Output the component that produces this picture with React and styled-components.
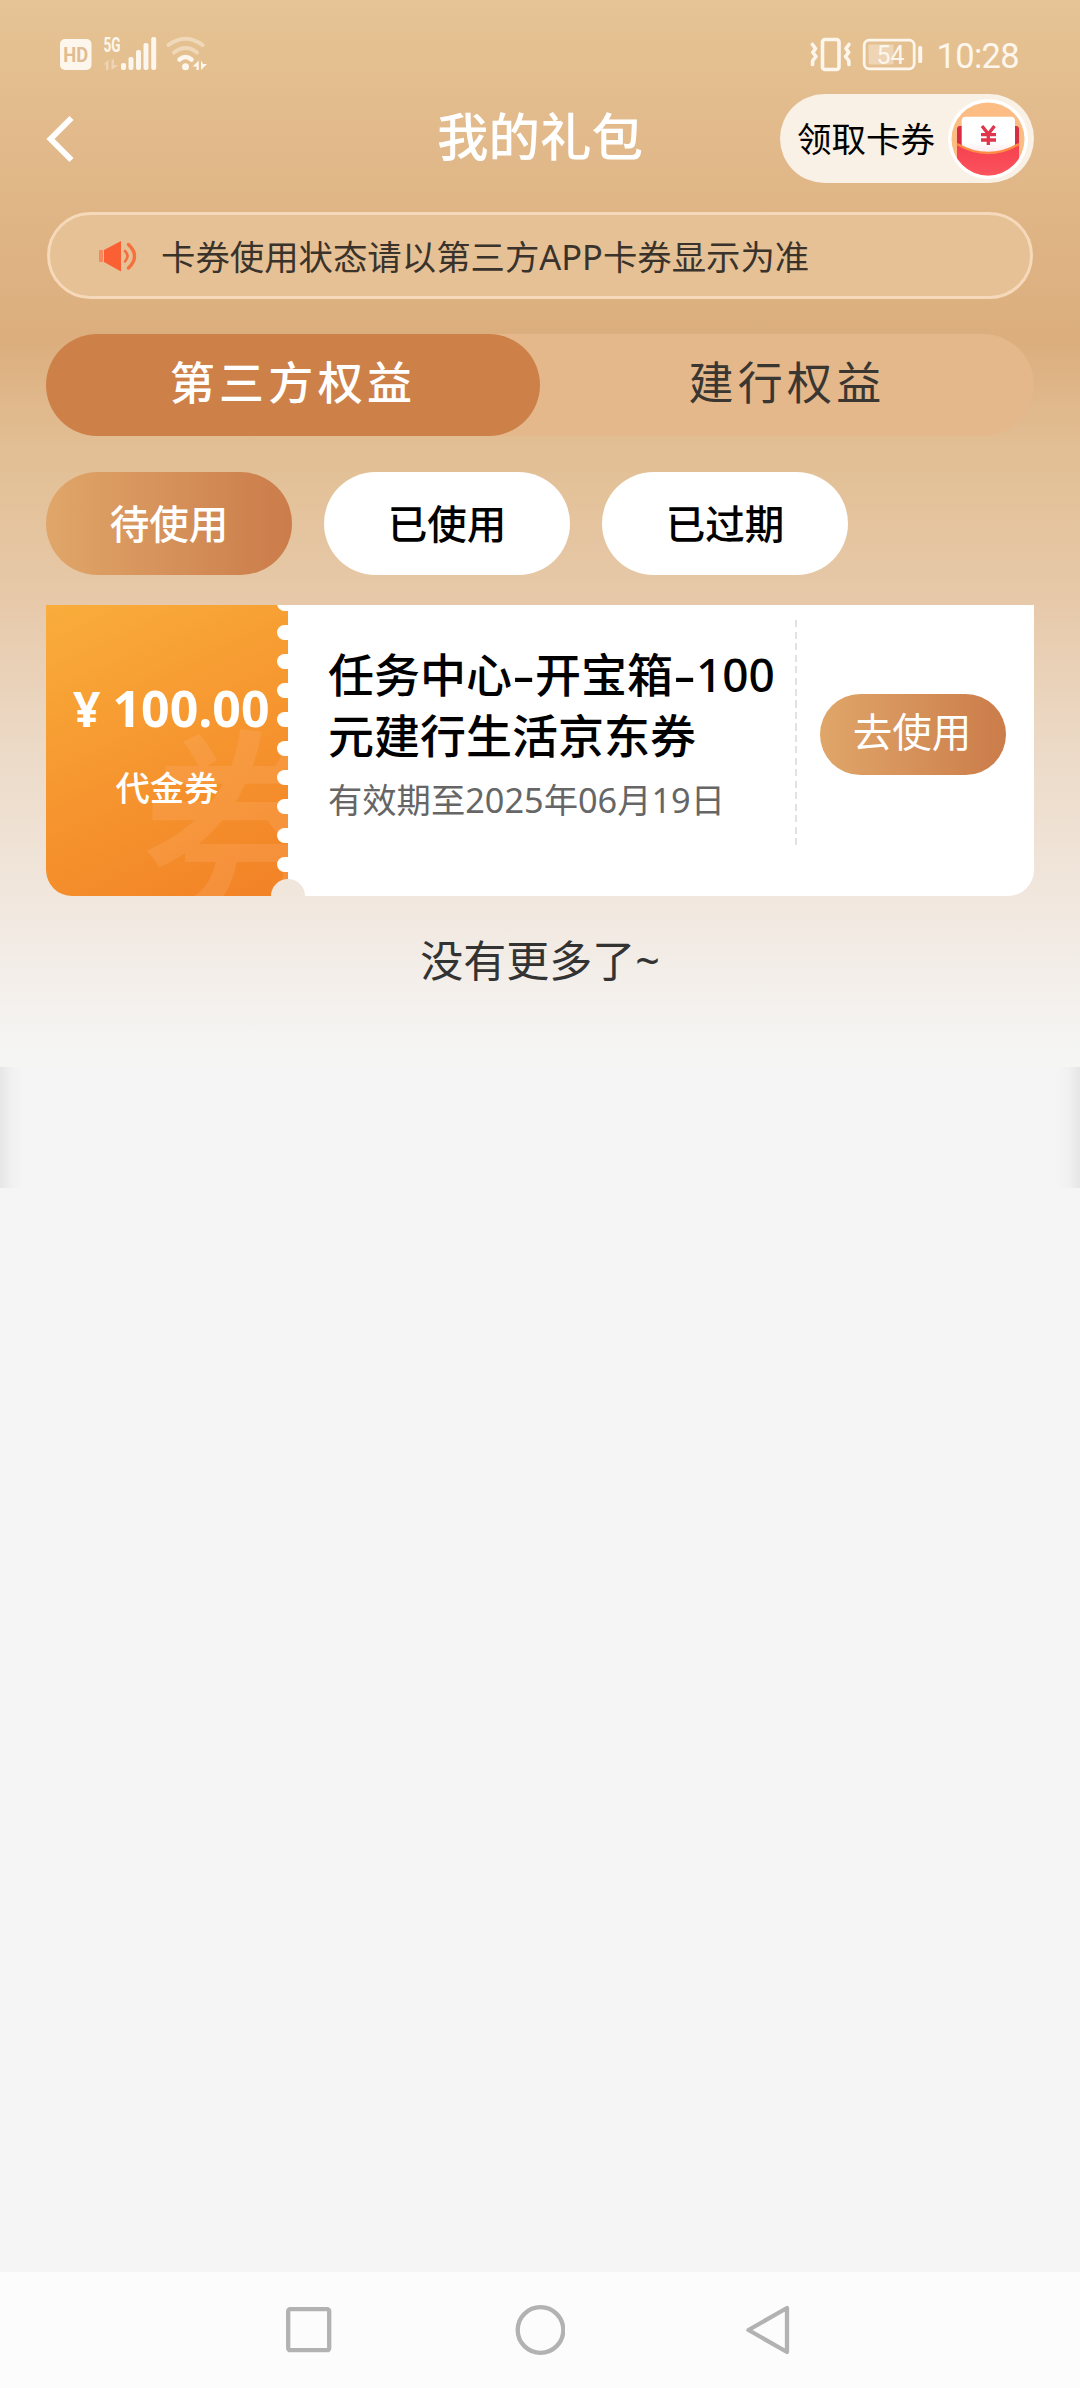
import React from "react";
import styled, { createGlobalStyle } from "styled-components";

const GlobalStyle = createGlobalStyle`
  * {
    box-sizing: border-box;
  }
  body {
    margin: 0;
    background-color: #f5f5f5;
    font-family: "Noto Sans", "Noto Sans CJK SC", sans-serif;
  }
  button {
    font-family: inherit;
    border: none;
    padding: 0;
    cursor: pointer;
  }
`;

const Page = styled.div`
  width: 1080px;
  height: 2388px;
  display: flex;
  flex-direction: column;
  background-color: #f5f5f5;
`;

const Hero = styled.div`
  height: 1067px;
  padding: 0 46px;
  display: flex;
  flex-direction: column;
  background: linear-gradient(
    180deg,
    #e6c495 0px,
    #e2ba8b 130px,
    #dcae7e 340px,
    #e2bf94 450px,
    #e7c9a9 600px,
    #ecdac7 750px,
    #f1e7de 900px,
    #f5f5f4 1050px
  );
`;

const StatusBar = styled.div`
  height: 94px;
  padding: 36px 0 0 12px;
  display: flex;
  align-items: flex-start;
  justify-content: space-between;
`;

const StatusRight = styled.div`
  display: flex;
  align-items: flex-start;
  gap: 10px;
  padding-right: 15px;
`;

const Clock = styled.span`
  font-family: Roboto, sans-serif;
  font-size: 34.5px;
  line-height: 40px;
  letter-spacing: -0.7px;
  margin-left: 3px;
  color: #fdf6ec;
`;

const Header = styled.header`
  height: 89px;
  display: grid;
  grid-template-columns: 1fr auto 1fr;
  align-items: center;
`;

const Title = styled.h1`
  margin: 0 0 6px;
  font-size: 51.5px;
  line-height: 76px;
  font-weight: 500;
  color: #ffffff;
`;

const ClaimButton = styled.button`
  justify-self: end;
  width: 254px;
  height: 89px;
  padding: 0 6px 0 17px;
  display: flex;
  align-items: center;
  justify-content: space-between;
  border-radius: 45px;
  background-color: #f9f0e6;
  color: #000000;
  font-size: 34.5px;
`;

const ClaimText = styled.span`
  padding-bottom: 3px;
`;

const Notice = styled.div`
  height: 87px;
  margin: 29px 1px 0;
  padding: 0 0 2px 48px;
  display: flex;
  align-items: center;
  gap: 23px;
  border: 3px solid #f5d9ba;
  border-radius: 44px;
  background-color: #e6c195;
  color: #3a332c;
  font-size: 34.4px;
`;

const Tabs = styled.div`
  height: 102px;
  margin-top: 35px;
  display: flex;
  border-radius: 51px;
  background-color: #e4b88b;
`;

const Tab = styled.button`
  flex: 1;
  padding-bottom: 9px;
  border-radius: 51px;
  background-color: ${(props) => (props.$active ? "#cd8149" : "transparent")};
  color: ${(props) => (props.$active ? "#ffffff" : "#3a3632")};
  font-size: 45px;
  font-weight: ${(props) => (props.$active ? 500 : 400)};
  letter-spacing: 4.3px;
`;

const Filters = styled.div`
  display: flex;
  gap: 32px;
  margin-top: 36px;
`;

const Filter = styled.button`
  width: 246px;
  height: 103px;
  padding-bottom: 4px;
  border-radius: 52px;
  background: ${(props) =>
    props.$active ? "linear-gradient(90deg, #e0a669, #cb7c4a)" : "#ffffff"};
  color: ${(props) => (props.$active ? "#ffffff" : "#000000")};
  font-size: 39.5px;
  font-weight: 500;
`;

const Coupon = styled.div`
  position: relative;
  height: 291px;
  margin-top: 30px;
  display: flex;
  border-radius: 0 0 26px 26px;
  overflow: hidden;
  background-color: #ffffff;
`;

const Amount = styled.div`
  position: relative;
  width: 242px;
  padding-top: 69px;
  overflow: hidden;
  background: linear-gradient(155deg, #f9ad3b 0%, #f6962f 50%, #f28226 100%);
  color: #ffffff;
`;

const Watermark = styled.span`
  position: absolute;
  left: 94px;
  top: 107px;
  font-family: "Noto Sans CJK SC", sans-serif;
  font-size: 212px;
  line-height: 212px;
  font-weight: 500;
  color: rgba(255, 180, 120, 0.24);
`;

const Price = styled.div`
  position: relative;
  display: flex;
  align-items: baseline;
  gap: 12px;
  padding-left: 27px;
  line-height: 68px;
  font-size: 50px;
  font-weight: 700;
  white-space: nowrap;
`;

const Yen = styled.span`
  font-size: 48px;
`;

const Kind = styled.div`
  position: relative;
  margin-top: 21px;
  text-align: center;
  font-size: 34.3px;
  line-height: 48px;
  font-weight: 500;
`;

/* perforated edge of the ticket */
const Perforation = styled.div`
  position: absolute;
  right: -3px;
  top: -9px;
  width: 14px;
  height: 291px;
  display: flex;
  flex-direction: column;
  gap: 14px;
`;

const Hole = styled.span`
  flex: none;
  width: 20px;
  height: 15px;
  border-radius: 8px;
  background-color: #ffffff;
`;

const Notch = styled.span`
  position: absolute;
  left: 225px;
  bottom: -17px;
  width: 34px;
  height: 34px;
  border-radius: 50%;
  background-color: #f1e6dc;
`;

const Detail = styled.div`
  flex: 1;
  padding: 39px 0 0 40px;
`;

const CouponName = styled.div`
  font-size: 46px;
  line-height: 61px;
  font-weight: 500;
  color: #000000;
  white-space: nowrap;
`;

const Dash = styled.span`
  display: inline-block;
  width: 0.5em;
  text-align: center;
  transform: scaleX(1.5);
`;

const Expiry = styled.div`
  margin-top: 9px;
  font-size: 34.3px;
  line-height: 50px;
  color: #666666;
`;

const Divider = styled.div`
  width: 2px;
  height: 227px;
  margin-top: 15px;
  background: repeating-linear-gradient(
    180deg,
    #e2e2e2 0 7px,
    transparent 7px 11.5px
  );
`;

const Action = styled.div`
  width: 237px;
  padding: 89px 0 0 23px;
`;

const UseButton = styled.button`
  width: 186px;
  height: 81px;
  padding: 0 2px 9px 0;
  border-radius: 41px;
  background: linear-gradient(90deg, #e0a669, #cb7c4a);
  color: #ffffff;
  font-size: 39.5px;
`;

const NoMore = styled.p`
  margin: 35px 0 0;
  text-align: center;
  font-size: 43px;
  line-height: 60px;
  color: #333333;
`;

const EdgeShade = styled.div`
  height: 121px;
  background: linear-gradient(
    90deg,
    #e6e6e6 0,
    #f1f1f1 12px,
    #f5f5f5 24px,
    #f5f5f5 1056px,
    #f1f1f1 1068px,
    #e6e6e6 1080px
  );
`;

const NavBar = styled.nav`
  height: 116px;
  margin-top: auto;
  padding: 32px 285px 0 284px;
  display: flex;
  justify-content: space-between;
  align-items: flex-start;
  background-color: #fcfcfc;
`;

const SignalIcons = () => (
  <svg width="152" height="36" viewBox="58 36 152 36" fill="#fdf6ec">
    <rect x="60" y="39" width="31.5" height="31" rx="5" />
    <text
      x="75.7"
      y="61.7"
      textAnchor="middle"
      fontFamily="Roboto"
      fontSize="20.5"
      fontWeight="700"
      textLength="25"
      lengthAdjust="spacingAndGlyphs"
      fill="#e0bc90"
    >
      HD
    </text>
    <text
      x="103.5"
      y="51.7"
      fontFamily="Roboto"
      fontSize="20"
      fontWeight="700"
      textLength="17"
      lengthAdjust="spacingAndGlyphs"
    >
      5G
    </text>
    <path
      d="M103.5 64.5L108.5 59.5V70H106V64.5ZM111.5 59.5H114V65H118.5L111.5 70Z"
      opacity="0.4"
    />
    <rect x="121" y="63" width="5" height="7" rx="2" />
    <rect x="128.5" y="57" width="5" height="13" rx="2" />
    <rect x="136" y="50" width="5" height="20" rx="2" />
    <rect x="143.5" y="43" width="5" height="27" rx="2" />
    <rect x="151.2" y="37" width="5" height="33" rx="2" />
    <g fill="none" stroke="#fdf6ec" strokeLinecap="round" strokeWidth="4">
      <path d="M168.5 45Q185.5 32.5 202.5 45" opacity="0.45" />
      <path d="M174 52.5Q185.5 43.5 197 52.5" opacity="0.45" />
      <path d="M179.5 59.5Q185.5 54.5 191.5 59.5" strokeWidth="4.5" />
    </g>
    <circle cx="185.5" cy="66.7" r="3.5" />
    <path d="M192.5 66.5L198.8 60.5V70H196.5V66.5ZM201 60.5L203.2 64H207L201 70Z" />
  </svg>
);

const VibrateIcon = () => (
  <svg
    width="42"
    height="36"
    viewBox="810 36 42 36"
    fill="none"
    stroke="#fdf6ec"
    strokeWidth="3.6"
    strokeLinejoin="round"
    strokeLinecap="round"
  >
    <rect x="822.5" y="39.5" width="16.5" height="30" rx="2.5" />
    <path d="M812.5 44.5L815.5 48.5L812.8 52.5L816 56.5L812.8 60.5L812.5 64.5" />
    <path d="M849 44.5L846 48.5L848.7 52.5L845.5 56.5L848.7 60.5L849 64.5" />
  </svg>
);

const BatteryIcon = () => (
  <svg width="62" height="36" viewBox="862 36 62 36">
    <rect
      x="864.2"
      y="40.2"
      width="50"
      height="28.6"
      rx="5"
      fill="none"
      stroke="#fdf6ec"
      strokeWidth="2.8"
    />
    <rect x="868.5" y="44.5" width="25" height="20" rx="1" fill="#fdf6ec" opacity="0.4" />
    <text
      x="890.5"
      y="64"
      textAnchor="middle"
      fontFamily="Roboto"
      fontSize="25.5"
      textLength="28"
      lengthAdjust="spacingAndGlyphs"
      fill="#fdf6ec"
    >
      54
    </text>
    <rect x="918.2" y="46" width="4" height="17" rx="1.5" fill="#fdf6ec" />
  </svg>
);

const BackIcon = () => (
  <svg width="30" height="50" viewBox="0 0 30 50">
    <path d="M25.5 4L4.5 25L25.5 46" fill="none" stroke="#fff" strokeWidth="5.8" />
  </svg>
);

const EnvelopeIcon = () => (
  <svg width="80" height="80" viewBox="0 0 80 80">
    <defs>
      <clipPath id="disc">
        <circle cx="40" cy="40" r="36.5" />
      </clipPath>
      <linearGradient id="pocket" x1="0" y1="0" x2="0" y2="1">
        <stop offset="0" stopColor="#f5404f" />
        <stop offset="1" stopColor="#fd5560" />
      </linearGradient>
      <linearGradient id="paper" x1="0" y1="0" x2="0" y2="1">
        <stop offset="0.6" stopColor="#ffffff" />
        <stop offset="1" stopColor="#fbdde3" />
      </linearGradient>
    </defs>
    <circle cx="40" cy="40" r="40" fill="#fff" />
    <circle cx="40" cy="40" r="36.5" fill="#fcbd85" />
    <g clipPath="url(#disc)">
      <rect x="9" y="27" width="62" height="30" rx="3" fill="#d92b42" />
      <rect x="13.7" y="17.7" width="53.3" height="42" rx="4" fill="url(#paper)" />
      <path d="M9 45Q40 63 71 45V80H9Z" fill="url(#pocket)" />
      <path d="M9 45Q40 63 71 45" fill="none" stroke="#ff8a45" strokeWidth="2.4" />
    </g>
    <path
      d="M34 27L40.3 35L46.5 27M40.3 34.5V46M33 35.7H48M33 41H48"
      fill="none"
      stroke="#e0354c"
      strokeWidth="3.3"
    />
  </svg>
);

const SpeakerIcon = () => (
  <svg width="40" height="34" viewBox="98 238 40 34">
    <rect x="99" y="250" width="4" height="12" fill="#f68a5e" />
    <path d="M104 250L121 241V271.5L104 262Z" fill="#fb6034" />
    <g fill="none" stroke="#f4703f" strokeLinecap="round" strokeWidth="2.6">
      <path d="M125 251Q130 256 125 261.5" />
      <path d="M128.5 244.5Q140.5 256 128.5 268" strokeWidth="3.4" />
    </g>
  </svg>
);

const NavIcon = ({ children }) => (
  <svg
    width="50"
    height="52"
    viewBox="0 0 50 52"
    fill="none"
    stroke="#b2b2b2"
    strokeWidth="4.3"
    strokeLinejoin="round"
  >
    {children}
  </svg>
);

const HOLES = Array.from({ length: 10 }, (_, i) => i);

export default function App() {
  return (
    <Page>
      <GlobalStyle />
      <Hero>
        <StatusBar>
          <SignalIcons />
          <StatusRight>
            <VibrateIcon />
            <BatteryIcon />
            <Clock>10:28</Clock>
          </StatusRight>
        </StatusBar>
        <Header>
          <BackIcon />
          <Title>我的礼包</Title>
          <ClaimButton>
            <ClaimText>领取卡券</ClaimText>
            <EnvelopeIcon />
          </ClaimButton>
        </Header>
        <Notice>
          <SpeakerIcon />
          卡券使用状态请以第三方APP卡券显示为准
        </Notice>
        <Tabs>
          <Tab $active>第三方权益</Tab>
          <Tab>建行权益</Tab>
        </Tabs>
        <Filters>
          <Filter $active>待使用</Filter>
          <Filter>已使用</Filter>
          <Filter>已过期</Filter>
        </Filters>
        <Coupon>
          <Amount>
            <Watermark>券</Watermark>
            <Price>
              <Yen>¥</Yen>100.00
            </Price>
            <Kind>代金券</Kind>
            <Perforation>
              {HOLES.map((i) => (
                <Hole key={i} />
              ))}
            </Perforation>
          </Amount>
          <Detail>
            <CouponName>
              任务中心<Dash>-</Dash>开宝箱<Dash>-</Dash>100
              <br />
              元建行生活京东券
            </CouponName>
            <Expiry>有效期至2025年06月19日</Expiry>
          </Detail>
          <Divider />
          <Action>
            <UseButton>去使用</UseButton>
          </Action>
          <Notch />
        </Coupon>
        <NoMore>没有更多了~</NoMore>
      </Hero>
      <EdgeShade />
      <NavBar>
        <NavIcon>
          <rect x="4.2" y="5.2" width="41" height="41" rx="2" />
        </NavIcon>
        <NavIcon>
          <circle cx="25.5" cy="26" r="22.8" />
        </NavIcon>
        <NavIcon>
          <path d="M42 4V48L3.5 26Z" />
        </NavIcon>
      </NavBar>
    </Page>
  );
}
